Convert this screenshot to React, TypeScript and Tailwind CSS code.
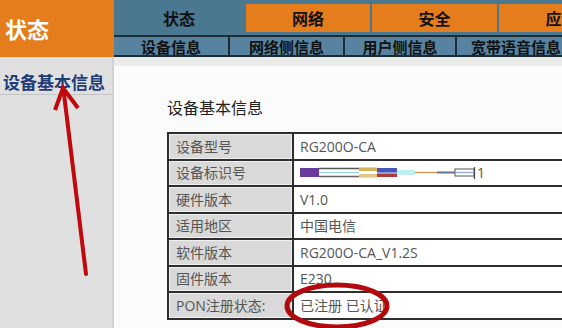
const topTabs = [
  { label: '状态', active: true, w: 'w-[130px]' },
  { label: '网络', active: false, w: 'w-[124px]' },
  { label: '安全', active: false, w: 'w-[125px]' },
  { label: '应用', active: false, w: 'w-[125px]' },
]

const subTabs = [
  { label: '设备信息', w: 'w-[114px]' },
  { label: '网络侧信息', w: 'w-[115px]' },
  { label: '用户侧信息', w: 'w-[112px]' },
  { label: '宽带语音信息', w: 'w-[120px]' },
]

const rows: { label: string; value: string | null }[] = [
  { label: '设备型号', value: 'RG200O-CA' },
  { label: '设备标识号', value: null },
  { label: '硬件版本', value: 'V1.0' },
  { label: '适用地区', value: '中国电信' },
  { label: '软件版本', value: 'RG200O-CA_V1.2S' },
  { label: '固件版本', value: 'E230' },
  { label: 'PON注册状态:', value: '已注册 已认证' },
]

// redacted device id strip
function IdStrip() {
  return (
    <div className="flex items-center">
      <svg width="176" height="12" viewBox="0 0 176 12">
        <rect x="0" y="1" width="19" height="9" fill="#6b3a9a" />
        <line x1="19" y1="1.5" x2="77" y2="1.5" stroke="#555" strokeWidth="1.4" />
        <line x1="19" y1="9.5" x2="77" y2="9.5" stroke="#666" strokeWidth="1.4" />
        <line x1="19" y1="5.5" x2="59" y2="5.5" stroke="#8fd6e0" strokeWidth="1" />
        <rect x="59" y="1" width="18" height="3" fill="#d8b25a" />
        <rect x="59" y="7" width="18" height="3" fill="#e2c98a" />
        <rect x="77" y="1" width="20" height="4" fill="#4656b8" />
        <rect x="77" y="5" width="20" height="2" fill="#8aa0d8" />
        <rect x="77" y="7" width="20" height="3" fill="#b23a3a" />
        <rect x="97" y="3" width="18" height="5" fill="#bfeef2" />
        <line x1="115" y1="5.5" x2="137" y2="5.5" stroke="#d48a4a" strokeWidth="1.2" />
        <line x1="137" y1="5.5" x2="155" y2="5.5" stroke="#6a7488" strokeWidth="2" />
        <rect x="155" y="2" width="19" height="7" fill="none" stroke="#555" strokeWidth="1" />
        <line x1="155" y1="5.5" x2="174" y2="5.5" stroke="#9ab0e0" strokeWidth="1.5" />
        <line x1="174.5" y1="0" x2="174.5" y2="12" stroke="#444" strokeWidth="1.2" />
      </svg>
      <span className="ml-[1px] text-[14px] text-[#555]">1</span>
    </div>
  )
}

export default function App() {
  return (
    <div className="relative h-[328px] w-[562px] overflow-hidden bg-white font-['Open_Sans','Noto_Sans_CJK_SC',sans-serif]">
      {/* header */}
      <div className="flex h-[57px]">
        <div className="flex w-[114px] shrink-0 items-center bg-[#e57d1d] pl-[5px] text-[22px] font-bold text-white font-['Noto_Sans_CJK_SC',sans-serif]">
          状态
        </div>
        <div className="flex flex-1 flex-col bg-[#4a7891]">
          <div className="flex h-[35px] gap-[2px] pt-[4px] pb-[3px]">
            {topTabs.map((t) => (
              <div
                key={t.label}
                className={`${t.w} flex shrink-0 items-center justify-center text-[16px] font-bold text-[#111] font-['Noto_Sans_CJK_SC',sans-serif] ${t.active ? 'bg-[#4a7891]' : 'bg-[#e57d1d]'}`}
              >
                {t.label}
              </div>
            ))}
          </div>
          <div className="flex h-[22px] border-y-2 border-[#1d2b32] bg-[#5783a0]">
            {subTabs.map((t, i) => (
              <div
                key={t.label}
                className={`${t.w} flex shrink-0 items-center justify-center text-[15px] font-bold leading-none text-[#111] font-['Noto_Sans_CJK_SC',sans-serif] ${i > 0 ? 'border-l-2 border-[#1d2b32]' : ''}`}
              >
                {t.label}
              </div>
            ))}
          </div>
        </div>
      </div>

      {/* body */}
      <div className="flex h-[271px]">
        <div className="w-[114px] shrink-0 border-r-2 border-[#d2d2d2] bg-[#e0e0e0] pt-[14px]">
          <div className="border-b border-[#c4c4c4] pb-[1px] pl-[3px] text-[17px] font-bold leading-[22px] text-[#1f3d78] font-['Noto_Sans_CJK_SC',sans-serif]">
            设备基本信息
          </div>
        </div>
        <div className="flex-1 bg-[#fbfbfb]">
          <div className="h-[9px] bg-[#e9ece9]" />
          <div className="pl-[53px] pt-[31px]">
            <div className="text-[16px] leading-[20px] text-[#222] font-['Noto_Sans_CJK_SC',sans-serif]">设备基本信息</div>
            <div className="mt-[15px] w-[440px] border-2 border-b-0 border-[#2e2e2e]">
              {rows.map((r) => (
                <div key={r.label} className="grid h-[26.5px] grid-cols-[123px_1fr] border-b-2 border-[#2e2e2e]">
                  <div className="flex items-center border border-[#f0f0f0] bg-[#d9d9d9] pl-[6px] text-[14px] text-[#555]">
                    {r.label}
                  </div>
                  <div className="flex items-center border-l-2 border-[#2e2e2e] bg-white pl-[6px] text-[14px] text-[#555]">
                    {r.value === null ? <IdStrip /> : r.value}
                  </div>
                </div>
              ))}
            </div>
          </div>
        </div>
      </div>

      {/* red annotations */}
      <svg className="pointer-events-none absolute left-0 top-0" width="562" height="328" viewBox="0 0 562 328">
        <line x1="86" y1="274" x2="64" y2="94" stroke="#c1080c" strokeWidth="4" strokeLinecap="round" />
        <polyline points="55,110 63,88 78,108" fill="none" stroke="#c1080c" strokeWidth="4" strokeLinejoin="miter" />
        <ellipse cx="337" cy="306" rx="50" ry="21" fill="none" stroke="#b30a0f" strokeWidth="5" />
      </svg>
    </div>
  )
}
